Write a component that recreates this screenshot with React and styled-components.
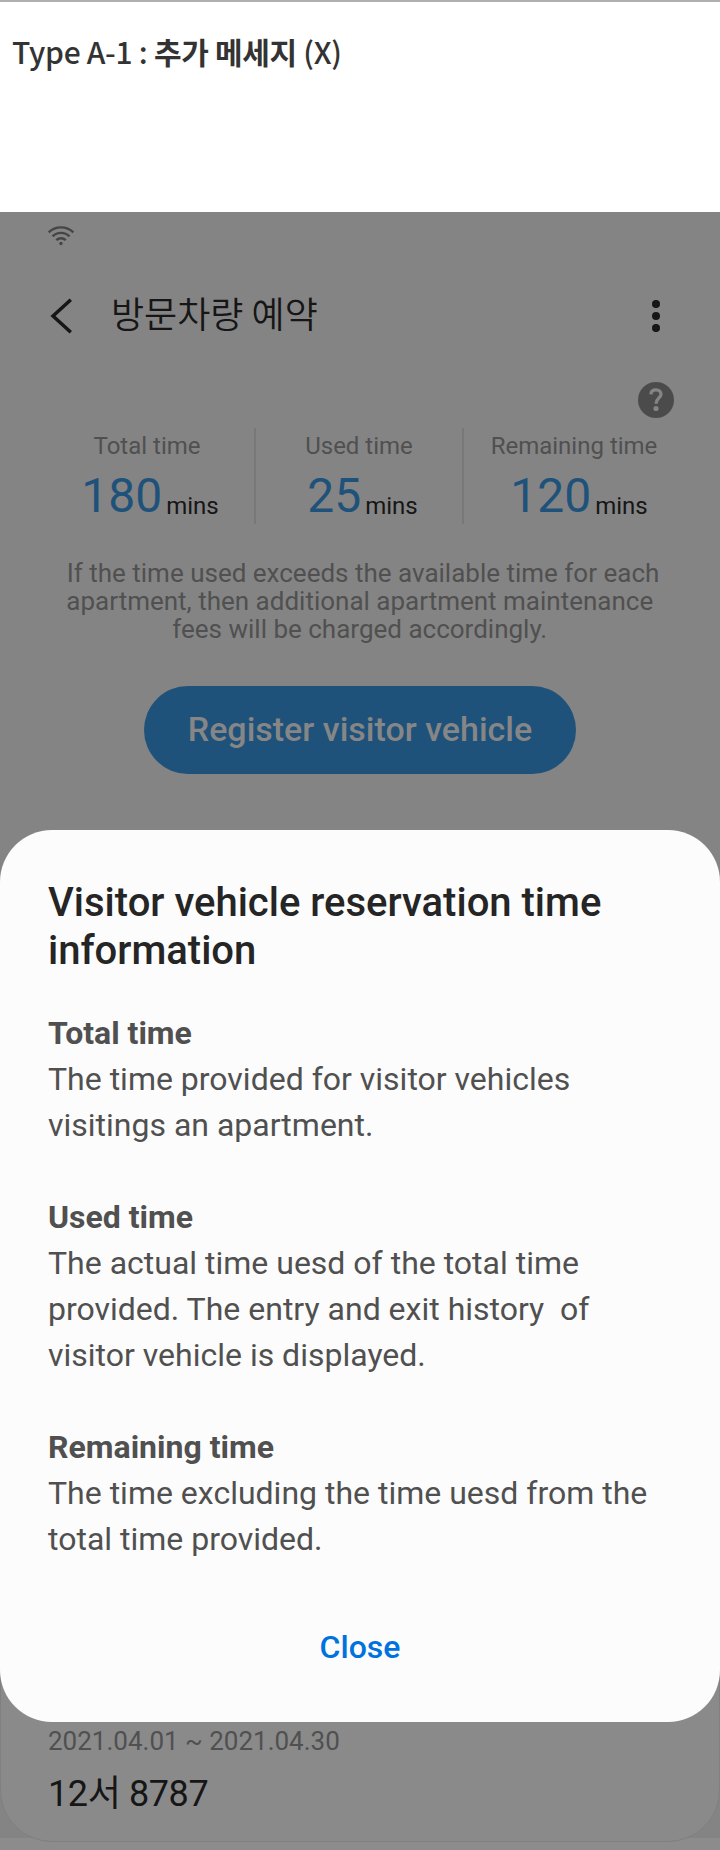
import React from "react";
import styled, { createGlobalStyle } from "styled-components";

const Global = createGlobalStyle`
  * { box-sizing: border-box; }
  body { margin: 0; background: #fff; font-family: Roboto, "Noto Sans CJK KR", sans-serif; }
  h1, h2, h3, p { margin: 0; font-weight: 400; }
  button { border: 0; background: none; padding: 0; font-family: inherit; display: block; }
  svg { display: block; }
`;

const Page = styled.main`
  width: 720px;
  height: 1850px;
  overflow: hidden;
`;

const Caption = styled.header`
  height: 212px;
  border-top: 2px solid #b0b0b0;
  padding: 29px 0 0 12px;
  font-family: "Noto Sans CJK KR", sans-serif;
  font-size: 30px;
  font-weight: 500;
  line-height: 40px;
  letter-spacing: -0.3px;
  white-space: nowrap;
  color: #333;

  strong {
    font-weight: 700;
  }
`;

const Phone = styled.section`
  position: relative;
  height: 1638px;
  background: #848484;
  display: flex;
  flex-direction: column;
`;

const StatusBar = styled.div`
  height: 44px;
  padding: 13px 0 0 47px;
`;

const AppBar = styled.div`
  height: 120px;
  padding: 0 46px 0 48px;
  display: flex;
  align-items: center;
`;

const AppTitle = styled.h1`
  flex: 1;
  margin-left: 35px;
  padding-bottom: 9px;
  font-family: "Noto Sans CJK KR", sans-serif;
  font-size: 36px;
  font-weight: 350;
  line-height: 48px;
  color: #161616;
`;

const HelpRow = styled.div`
  display: flex;
  justify-content: flex-end;
  height: 52px;
  padding: 6px 46px 0 0;
`;

const Stats = styled.div`
  display: grid;
  grid-template-columns: 216px 208px 220px;
  grid-template-rows: 96px;
  margin-left: 40px;
  height: 96px;
`;

const Stat = styled.div`
  padding-top: 4px;
  text-align: center;
  border-right: ${(p) => (p.$last ? "0" : "2px solid #787878")};
`;

const StatLabel = styled.div`
  font-size: 24px;
  line-height: 28px;
  height: 40px;
  color: #505050;
`;

const StatValue = styled.div`
  display: flex;
  justify-content: center;
  padding-left: ${(p) => p.$shift}px;
  gap: 4px;
  height: 48px;
  line-height: 48px;
  font-size: 48px;
  color: #1f527a;
`;

const Unit = styled.span`
  font-size: 24px;
  padding-top: 10px;
  color: #161616;
`;

const Notice = styled.p`
  margin: 35px 0 0 6px;
  text-align: center;
  font-size: 26px;
  line-height: 28px;
  color: #505050;
`;

const RegisterButton = styled.button`
  width: 432px;
  height: 88px;
  margin: 43px auto 0;
  padding-bottom: 2px;
  border-radius: 44px;
  background: #1f527a;
  color: #868686;
  font-size: 34px;
  font-weight: 500;
`;

const CardArea = styled.div`
  flex: 1;
  display: flex;
  flex-direction: column;
  padding-bottom: 8px;
  background: linear-gradient(#848484 0 1064px, #8c8c8c 1064px);
`;

const Card = styled.div`
  flex: 1;
  margin-top: 68px;
  padding: 0 47px 25px;
  border: 1px solid #808080;
  border-radius: 52px;
  background: #8a8a8a;
  display: flex;
  flex-direction: column;
  justify-content: flex-end;
  gap: 15px;
`;

const Period = styled.div`
  font-size: 26px;
  line-height: 32px;
  color: #505050;
`;

const Plate = styled.div`
  font-size: 36px;
  line-height: 44px;
  letter-spacing: -0.4px;
  color: #161616;
`;

const Sheet = styled.div`
  position: absolute;
  left: 0;
  right: 0;
  top: 618px;
  height: 892px;
  padding: 49px 48px 0;
  border-radius: 52px;
  background: #fcfcfc;
`;

const SheetTitle = styled.h2`
  font-size: 40px;
  font-weight: 500;
  line-height: 48px;
  color: #252525;
`;

const SheetBody = styled.div`
  display: flex;
  flex-direction: column;
  gap: 46px;
  margin-top: 35px;
  font-size: 32px;
  line-height: 46px;
  color: #505050;
  white-space: pre;
`;

const Term = styled.h3`
  font-size: 32px;
  font-weight: 700;
`;

const CloseButton = styled.button`
  margin: 62px auto 0;
  font-size: 32px;
  font-weight: 500;
  line-height: 46px;
  color: #0072de;
`;

const WifiIcon = () => (
  <svg width="28" height="22" viewBox="0 0 28 22" fill="none" stroke="#454545" strokeWidth="2.4">
    <path d="M1.700 7.300C8.500 .7 19.500 .7 26.300 7.300" />
    <path d="M5.500 11.400C10.200 6.700 17.800 6.700 22.500 11.400" />
    <path d="M9.300 15.200C12 12.500 16 12.500 18.700 15.200" />
    <circle cx="14" cy="18.500" r="1.700" fill="#454545" stroke="none" />
  </svg>
);

const BackIcon = () => (
  <svg width="28" height="40" viewBox="0 0 28 40" fill="none" stroke="#161616" strokeWidth="3.500">
    <path d="M22.800 3.700L5 20L22.800 36.300" />
  </svg>
);

const MoreIcon = () => (
  <svg width="36" height="36" viewBox="0 0 36 36" fill="#161616">
    <circle cx="18" cy="6" r="4" />
    <circle cx="18" cy="18" r="4" />
    <circle cx="18" cy="30" r="4" />
  </svg>
);

const HelpIcon = () => (
  <svg width="36" height="36" viewBox="0 0 36 36" fill="none">
    <circle cx="18" cy="18" r="18" fill="#4b4b4b" />
    <path d="M12.900 12.300C13.100 9.500 15 7.900 18 7.900C21 7.900 23 9.700 23 12.200C23 15.800 18 16.200 18 21.700" stroke="#848484" strokeWidth="3.300" />
    <circle cx="18" cy="26.500" r="2.600" fill="#848484" />
  </svg>
);

const stats = [
  { label: "Total time", value: "180", shift: 6 },
  { label: "Used time", value: "25", shift: 7 },
  { label: "Remaining time", value: "120", shift: 10 },
];

const terms = [
  { term: "Total time", text: "The time provided for visitor vehicles\nvisitings an apartment." },
  {
    term: "Used time",
    text: "The actual time uesd of the total time\nprovided. The entry and exit history  of\nvisitor vehicle is displayed.",
  },
  { term: "Remaining time", text: "The time excluding the time uesd from the\ntotal time provided." },
];

export default function App() {
  return (
    <Page>
      <Global />
      <Caption>
        Type A-1 : <strong>추가 메세지</strong> (X)
      </Caption>
      <Phone>
        <StatusBar>
          <WifiIcon />
        </StatusBar>
        <AppBar>
          <BackIcon />
          <AppTitle>방문차량 예약</AppTitle>
          <MoreIcon />
        </AppBar>
        <HelpRow>
          <HelpIcon />
        </HelpRow>
        <Stats>
          {stats.map((s, i) => (
            <Stat key={s.label} $last={i === stats.length - 1}>
              <StatLabel>{s.label}</StatLabel>
              <StatValue $shift={s.shift}>
                {s.value}
                <Unit>mins</Unit>
              </StatValue>
            </Stat>
          ))}
        </Stats>
        <Notice>
          If the time used exceeds the available time for each
          <br />
          apartment, then additional apartment maintenance&nbsp;
          <br />
          fees will be charged accordingly.&nbsp;
        </Notice>
        <RegisterButton>Register visitor vehicle</RegisterButton>
        <CardArea>
          <Card>
            <Period>2021.04.01 ~ 2021.04.30</Period>
            <Plate>12서 8787</Plate>
          </Card>
        </CardArea>
        <Sheet>
          <SheetTitle>
            Visitor vehicle reservation time
            <br />
            information
          </SheetTitle>
          <SheetBody>
            {terms.map((t) => (
              <div key={t.term}>
                <Term>{t.term}</Term>
                <p>{t.text}</p>
              </div>
            ))}
          </SheetBody>
          <CloseButton>Close</CloseButton>
        </Sheet>
      </Phone>
    </Page>
  );
}
